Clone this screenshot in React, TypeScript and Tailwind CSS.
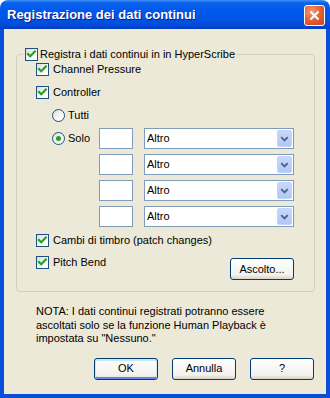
import React from 'react';

const font = { fontFamily: '"Liberation Sans", Arial, sans-serif' };

function CheckBox() {
  return (
    <div className="w-[13px] h-[13px] shrink-0 border border-[#1c5180] bg-[linear-gradient(135deg,#dcdcd7,#ffffff_75%)] flex items-center justify-center">
      <svg width="11" height="11" viewBox="0 0 11 11">
        <path d="M2 5 L4.2 7.2 L8.8 2.6" stroke="#21a121" strokeWidth="2.2" fill="none" strokeLinecap="square" />
      </svg>
    </div>
  );
}

function Radio({ checked }: { checked?: boolean }) {
  return (
    <div className="w-[13px] h-[13px] shrink-0 rounded-full border border-[#1c5180] bg-[linear-gradient(135deg,#dcdcd7,#ffffff_75%)] flex items-center justify-center">
      {checked && <div className="w-[5px] h-[5px] rounded-full bg-[#21a121]" />}
    </div>
  );
}

function CheckRow({ label }: { label: string }) {
  return (
    <div className="flex items-center h-[13px] gap-[4px]">
      <CheckBox />
      <span className="leading-[13px]">{label}</span>
    </div>
  );
}

function Combo() {
  return (
    <div className="w-[150px] h-[21px] border border-[#7f9db9] bg-white flex items-center justify-between pl-[2px] pr-[1px]">
      <span className="leading-[13px]">Altro</span>
      <div className="w-[15px] h-[17px] rounded-[2px] border border-[#c3d3fd] bg-[linear-gradient(to_bottom,#c8d8fc,#b2c7f7)] flex items-center justify-center">
        <svg width="9" height="6" viewBox="0 0 9 6">
          <path d="M1.2 1.2 L4.5 4.5 L7.8 1.2" stroke="#4d6185" strokeWidth="1.8" fill="none" />
        </svg>
      </div>
    </div>
  );
}

function TextBox() {
  return <div className="w-[34px] h-[21px] border border-[#7f9db9] bg-white" />;
}

function XpButton({ label, primary }: { label: string; primary?: boolean }) {
  return (
    <div
      className={
        primary
          ? 'w-[64px] h-[22px] rounded-[3px] border border-[#003c74] bg-[linear-gradient(to_bottom,#ffffff,#f2f1ec_80%,#d8d2c6)] shadow-[inset_0_1px_0_1px_#cee7ff,inset_0_-1px_0_1px_#6982ee] flex items-center justify-center leading-[13px]'
          : 'w-[64px] h-[22px] rounded-[3px] border border-[#003c74] bg-[linear-gradient(to_bottom,#ffffff,#f2f1ec_80%,#d8d2c6)] flex items-center justify-center leading-[13px]'
      }
    >
      {label}
    </div>
  );
}

export default function App() {
  return (
    <div className="w-[330px] h-[398px] flex flex-col rounded-t-[8px] overflow-hidden text-[11px] text-black" style={font}>
      {/* title bar */}
      <div className="h-[29px] shrink-0 flex items-center justify-between pl-[7px] pr-[5px] pt-[1px] bg-[linear-gradient(to_bottom,#3d8ef7_0%,#0a61ea_10%,#0058ee_35%,#0055e5_65%,#004ad8_88%,#003cc0_100%)]">
        <span className="text-[13px] font-bold text-white leading-[16px] [text-shadow:1px_1px_0_#0a1a8a]">
          Registrazione dei dati continui
        </span>
        <div className="w-[21px] h-[21px] rounded-[3px] border border-white bg-[radial-gradient(circle_at_35%_30%,#f39a74,#e35a2c_55%,#c8441c)] flex items-center justify-center">
          <svg width="11" height="11" viewBox="0 0 11 11">
            <path d="M1.5 1.5 L9.5 9.5 M9.5 1.5 L1.5 9.5" stroke="#ffffff" strokeWidth="2" />
          </svg>
        </div>
      </div>

      {/* body */}
      <div className="flex-1 bg-[#ece9d8] border-x-4 border-b-4 border-[#0a4fdc] pt-[19px] px-[12px] flex flex-col">
        <fieldset className="border border-[#d0d0bf] rounded-[4px] pb-[11px]">
          <legend className="ml-[6px] px-[2px]">
            <div className="flex items-center h-[13px] gap-[2px]">
              <CheckBox />
              <span className="leading-[13px]">Registra i dati continui in in HyperScribe</span>
            </div>
          </legend>

          <div className="mt-[2px] pl-[19px] pr-[20px] flex flex-col">
            <CheckRow label="Channel Pressure" />
            <div className="mt-[10px]">
              <CheckRow label="Controller" />
            </div>

            <div className="mt-[10px] pl-[16px] flex items-center h-[13px] gap-[3px]">
              <Radio />
              <span className="leading-[13px]">Tutti</span>
            </div>

            <div className="mt-[6px] flex items-center h-[21px]">
              <div className="w-[63px] pl-[16px] flex items-center gap-[3px]">
                <Radio checked />
                <span className="leading-[13px]">Solo</span>
              </div>
              <TextBox />
              <div className="ml-[11px]">
                <Combo />
              </div>
            </div>

            {[0, 1, 2].map((i) => (
              <div key={i} className="mt-[5px] flex items-center h-[21px] pl-[63px]">
                <TextBox />
                <div className="ml-[11px]">
                  <Combo />
                </div>
              </div>
            ))}

            <div className="mt-[7px]">
              <CheckRow label="Cambi di timbro (patch changes)" />
            </div>

            <div className="mt-[9px] flex items-start justify-between">
              <CheckRow label="Pitch Bend" />
              <div className="mt-[2px]">
                <XpButton label="Ascolto..." />
              </div>
            </div>
          </div>
        </fieldset>

        <p className="mt-[13px] pl-[20px] leading-[13.5px]">
          NOTA: I dati continui registrati potranno essere
          <br />
          ascoltati solo se la funzione Human Playback è
          <br />
          impostata su "Nessuno."
        </p>

        <div className="mt-[12px] flex justify-end gap-[14px]">
          <XpButton label="OK" primary />
          <XpButton label="Annulla" />
          <XpButton label="?" />
        </div>
      </div>
    </div>
  );
}
